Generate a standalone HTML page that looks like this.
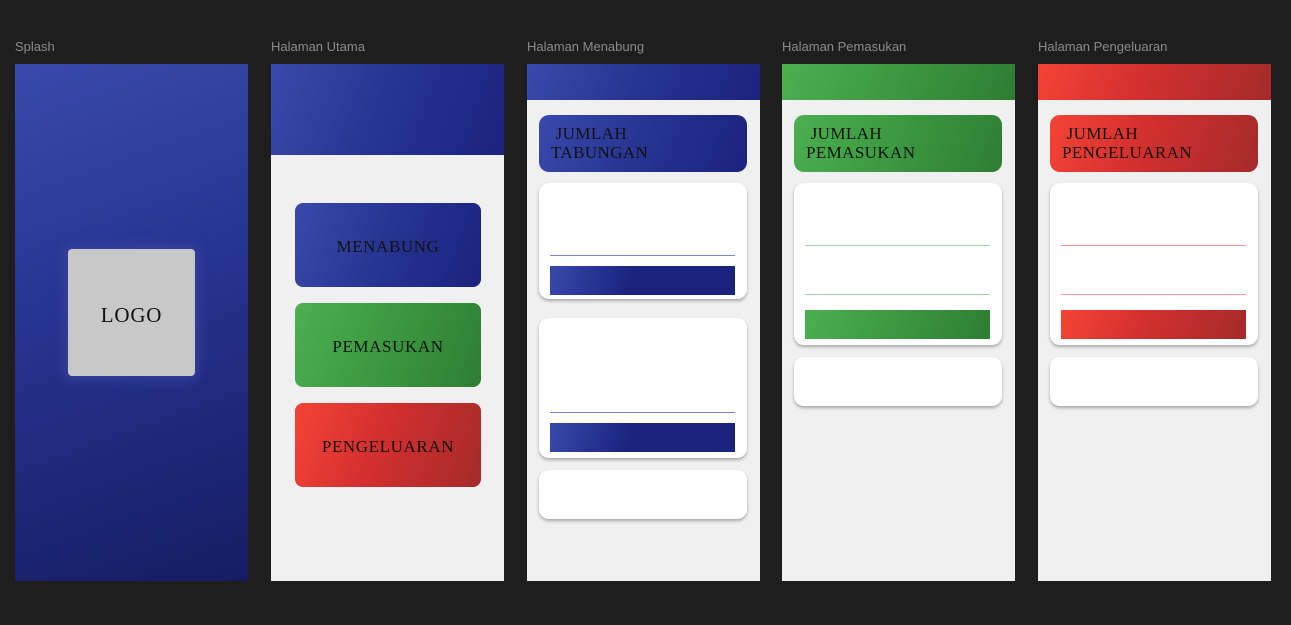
<!DOCTYPE html>
<html><head><style>
body{margin:0;width:1291px;height:625px;background:#1e1e1e;position:relative;overflow:hidden;font-family:"Liberation Serif",serif}
.a{position:absolute}
.lbl{font-family:"Liberation Sans",sans-serif;font-size:13px;color:#8a8a8a;top:39px}
.fr{top:64px;width:233px;height:517px;background:#f0f0f0}
.blue{background:linear-gradient(110deg,#3949ab 0%,#283593 45%,#1a237e 100%)}
.green{background:linear-gradient(110deg,#4caf50 0%,#3d9a42 45%,#2e7d32 100%)}
.red{background:linear-gradient(110deg,#f44336 0%,#d32f2f 45%,#a52a2a 100%)}
.btn{left:24px;width:186px;height:84px;border-radius:8px;display:flex;align-items:center;justify-content:center;font-size:17px;letter-spacing:.6px;color:#111;padding-top:3px;box-sizing:border-box}
.title{left:12px;width:208px;height:57px;border-radius:10px;font-size:17px;line-height:19px;letter-spacing:.4px;color:#111;box-sizing:border-box;padding:9px 12px}
.card{left:12px;width:208px;background:#fff;border-radius:10px;box-shadow:0 2px 3px rgba(0,0,0,.3)}
.ln{left:11px;width:185px;height:1px}
.bar{left:11px;width:185px;height:29px}
</style></head><body>
<div class="a lbl" style="left:15px">Splash</div>
<div class="a lbl" style="left:271px">Halaman Utama</div>
<div class="a lbl" style="left:527px">Halaman Menabung</div>
<div class="a lbl" style="left:782px">Halaman Pemasukan</div>
<div class="a lbl" style="left:1038px">Halaman Pengeluaran</div>

<div class="a fr" style="left:15px;background:linear-gradient(160deg,#3949ab 0%,#283593 40%,#151c63 100%)">
<div class="a" style="left:53px;top:185px;width:127px;height:127px;background:#c8c8c8;border-radius:4px;box-shadow:0 0 12px 4px rgba(60,70,160,.8);display:flex;align-items:center;justify-content:center;font-size:21px;letter-spacing:.8px;color:#111;padding-top:6px;box-sizing:border-box">LOGO</div>
</div>

<div class="a fr" style="left:271px">
<div class="a blue" style="left:0;top:0;width:233px;height:91px"></div>
<div class="a btn blue" style="top:139px">MENABUNG</div>
<div class="a btn green" style="top:239px">PEMASUKAN</div>
<div class="a btn red" style="top:339px">PENGELUARAN</div>
</div>

<div class="a fr" style="left:527px">
<div class="a blue" style="left:0;top:0;width:233px;height:36px"></div>
<div class="a title blue" style="top:51px">&nbsp;JUMLAH<br>TABUNGAN</div>
<div class="a card" style="top:119px;height:116px">
<div class="a ln" style="top:72px;background:#7986cb"></div>
<div class="a bar" style="top:83px;background:linear-gradient(110deg,#3949ab 0%,#1a237e 45%,#1a237e 100%)"></div></div>
<div class="a card" style="top:254px;height:140px">
<div class="a ln" style="top:94px;background:#7986cb"></div>
<div class="a bar" style="top:105px;background:linear-gradient(110deg,#3949ab 0%,#1a237e 45%,#1a237e 100%)"></div></div>
<div class="a card" style="top:406px;height:49px"></div>
</div>

<div class="a fr" style="left:782px">
<div class="a green" style="left:0;top:0;width:233px;height:36px"></div>
<div class="a title green" style="top:51px">&nbsp;JUMLAH<br>PEMASUKAN</div>
<div class="a card" style="top:119px;height:162px">
<div class="a ln" style="top:62px;background:#a5d6a7"></div>
<div class="a ln" style="top:111px;background:#a5d6a7"></div>
<div class="a bar green" style="top:127px"></div></div>
<div class="a card" style="top:293px;height:49px"></div>
</div>

<div class="a fr" style="left:1038px">
<div class="a red" style="left:0;top:0;width:233px;height:36px"></div>
<div class="a title red" style="top:51px">&nbsp;JUMLAH<br>PENGELUARAN</div>
<div class="a card" style="top:119px;height:162px">
<div class="a ln" style="top:62px;background:#ef9a9a"></div>
<div class="a ln" style="top:111px;background:#ef9a9a"></div>
<div class="a bar red" style="top:127px"></div></div>
<div class="a card" style="top:293px;height:49px"></div>
</div>
</body></html>
